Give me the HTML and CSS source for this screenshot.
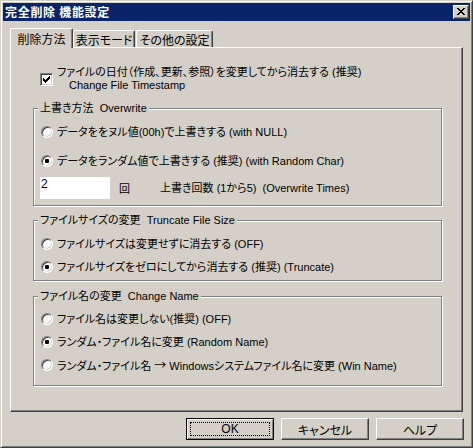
FILE: index.html
```html
<!DOCTYPE html>
<html lang="ja">
<head>
<meta charset="utf-8">
<title>完全削除 機能設定</title>
<link rel="stylesheet" href="styles.css">
</head>
<body>
<div class="window">
  <div class="titlebar">
    <span class="title">完全削除 機能設定</span>
    <span class="close-btn">
      <svg class="close-x" width="8" height="7" viewBox="0 0 8 7" shape-rendering="crispEdges">
        <rect x="0" y="0" width="2" height="1"/><rect x="6" y="0" width="2" height="1"/>
        <rect x="1" y="1" width="2" height="1"/><rect x="5" y="1" width="2" height="1"/>
        <rect x="2" y="2" width="4" height="1"/>
        <rect x="3" y="3" width="2" height="1"/>
        <rect x="2" y="4" width="4" height="1"/>
        <rect x="1" y="5" width="2" height="1"/><rect x="5" y="5" width="2" height="1"/>
        <rect x="0" y="6" width="2" height="1"/><rect x="6" y="6" width="2" height="1"/>
      </svg>
    </span>
  </div>

  <div class="client">
    <div class="tabs">
      <div class="tab active tab-1">削除方法</div>
      <div class="tab tab-2">表示モード</div>
      <div class="tab tab-3">その他の設定</div>
    </div>

    <div class="panel">
      <div class="check-row">
        <span class="checkbox">
          <svg width="7" height="7" viewBox="0 0 7 7" shape-rendering="crispEdges">
            <rect x="0" y="2" width="1" height="3"/>
            <rect x="1" y="3" width="1" height="3"/>
            <rect x="2" y="4" width="1" height="3"/>
            <rect x="3" y="3" width="1" height="3"/>
            <rect x="4" y="2" width="1" height="3"/>
            <rect x="5" y="1" width="1" height="3"/>
            <rect x="6" y="0" width="1" height="3"/>
          </svg>
        </span>
        <div class="check-label">
          <div>ファイルの日付（作成、更新、参照）を変更してから消去する (推奨)</div>
          <div class="sub">Change File Timestamp</div>
        </div>
      </div>

      <fieldset class="group group-overwrite">
        <legend>上書き方法&nbsp; Overwrite</legend>
        <div class="radio-row row-a"><span class="radio"></span><span class="opt">データををヌル値(00h)で上書きする (with NULL)</span></div>
        <div class="radio-row row-b"><span class="radio checked"></span><span class="opt">データをランダム値で上書きする (推奨) (with Random Char)</span></div>
        <div class="count-row">
          <span class="edit">2</span>
          <span class="unit">回</span>
          <span class="count-label">上書き回数 (1から5)&nbsp; (Overwrite Times)</span>
        </div>
      </fieldset>

      <fieldset class="group group-size">
        <legend>ファイルサイズの変更&nbsp; Truncate File Size</legend>
        <div class="radio-row row-c"><span class="radio"></span><span class="opt">ファイルサイズは変更せずに消去する (OFF)</span></div>
        <div class="radio-row row-d"><span class="radio checked"></span><span class="opt">ファイルサイズをゼロにしてから消去する (推奨) (Truncate)</span></div>
      </fieldset>

      <fieldset class="group group-name">
        <legend>ファイル名の変更&nbsp; Change Name</legend>
        <div class="radio-row row-e"><span class="radio"></span><span class="opt">ファイル名は変更しない(推奨) (OFF)</span></div>
        <div class="radio-row row-f"><span class="radio checked"></span><span class="opt">ランダム・ファイル名に変更 (Random Name)</span></div>
        <div class="radio-row row-f"><span class="radio"></span><span class="opt">ランダム・ファイル名 <span class="arrow">→</span> Windowsシステムファイル名に変更 (Win Name)</span></div>
      </fieldset>
    </div>

    <div class="buttons">
      <span class="btn default"><span class="focus">OK</span></span>
      <span class="btn">キャンセル</span>
      <span class="btn">ヘルプ</span>
    </div>
  </div>
</div>
</body>
</html>
```

FILE: styles.css
```css
* { box-sizing: border-box; }

html, body {
  margin: 0;
  padding: 0;
}

body {
  width: 473px;
  height: 448px;
  overflow: hidden;
  background: #d4d0c8;
  color: #000;
  font-family: "Liberation Sans", "Noto Sans CJK JP", sans-serif;
  font-size: 11px;
  line-height: 13px;
  font-feature-settings: "palt";
}

.window {
  width: 473px;
  height: 448px;
  border: 1px solid;
  border-color: #d4d0c8 #404040 #404040 #d4d0c8;
  box-shadow: inset 1px 1px #fff, inset -1px -1px #808080;
  padding: 2px;
  display: flex;
  flex-direction: column;
}

/* title bar */
.titlebar {
  height: 18px;
  background: #0a246a;
  display: flex;
  align-items: center;
  justify-content: space-between;
  padding: 0 1px 0 2px;
}

.title {
  color: #fff;
  font-family: "Noto Sans CJK JP", sans-serif;
  font-weight: bold;
  font-size: 12px;
  letter-spacing: 0.7px;
  line-height: 18px;
}

.close-btn {
  width: 16px;
  height: 14px;
  background: #d4d0c8;
  border: 1px solid;
  border-color: #fff #404040 #404040 #fff;
  box-shadow: inset -1px -1px #808080;
  padding: 2px 0 0 3px;
  display: block;
}

.close-x { display: block; fill: #000; }

/* client area */
.client {
  flex: 1;
  display: flex;
  flex-direction: column;
  padding: 7px 7px 0 7px;
}

.tabs {
  display: flex;
  align-items: flex-end;
  height: 19px;
}

.tab {
  height: 17px;
  border-top: 1px solid #fff;
  border-left: 1px solid #fff;
  border-right: 1px solid #404040;
  border-radius: 2px 2px 0 0;
  box-shadow: inset -1px 0 #808080;
  background: #d4d0c8;
  display: flex;
  align-items: center;
  justify-content: center;
  font-family: "Noto Sans CJK JP", sans-serif;
  font-size: 12px;
  white-space: nowrap;
}

.tab.active {
  position: relative;
  z-index: 1;
  height: 20px;
  margin-bottom: -1px;
  padding-bottom: 1px;
}

.tab-1 { width: 63px; }
.tab-2 { width: 62px; }
.tab-3 { width: 77px; margin-left: 1px; }

.panel {
  width: 453px;
  height: 365px;
  border: 1px solid;
  border-color: #fff #404040 #404040 #fff;
  box-shadow: inset -1px -1px #808080;
  padding: 18px 20px 0 22px;
}

/* checkbox row */
.check-row {
  display: flex;
  align-items: flex-start;
  margin-left: 7px;
}

.checkbox {
  width: 13px;
  height: 13px;
  margin-top: 7px;
  background: #fff;
  border: 1px solid;
  border-color: #808080 #fff #fff #808080;
  box-shadow: inset 1px 1px #404040, inset -1px -1px #d4d0c8;
  padding: 2px 0 0 2px;
  flex: none;
}

.checkbox svg { display: block; fill: #000; }

.check-label {
  margin-left: 4px;
  line-height: 13px;
  white-space: nowrap;
}

.check-label .sub { padding-left: 12px; }

/* group boxes */
.group {
  margin: 0;
  min-width: 0;
  border: 1px solid #808080;
  box-shadow: inset 1px 1px #fff, 1px 1px #fff;
  padding: 0 0 6px 7px;
}

.group legend {
  display: block;
  height: 13px;
  line-height: 13px;
  padding: 0 2px;
  margin-left: -3px;
  background: #d4d0c8;
  white-space: nowrap;
}

.group-overwrite { margin-top: 10px; }
.group-size { margin-top: 8px; }
.group-name { margin-top: 9px; padding-bottom: 13px; }

.radio-row {
  display: flex;
  align-items: center;
  height: 14px;
  white-space: nowrap;
}

.row-a { margin-top: 10px; }
.row-b { margin-top: 15px; }
.row-c { margin-top: 10px; }
.row-d { margin-top: 9px; }
.row-e { margin-top: 9px; }
.row-f { margin-top: 9px; }

.radio {
  width: 12px;
  height: 12px;
  flex: none;
  border-radius: 50%;
  background: #fff;
  border: 1px solid;
  border-color: #808080 #fff #fff #808080;
  box-shadow: inset 1px 1px #404040, inset -1px -1px #d4d0c8;
  display: flex;
  align-items: center;
  justify-content: center;
}

.radio.checked::after {
  content: "";
  width: 4px;
  height: 4px;
  border-radius: 1px;
  background: #000;
}

.opt { margin-left: 4px; line-height: 14px; }

.arrow {
  font-family: "Noto Sans CJK JP", sans-serif;
  font-feature-settings: normal;
  font-size: 12px;
}

.count-row {
  display: flex;
  align-items: center;
  height: 22px;
  margin-top: 9px;
  margin-left: -1px;
  white-space: nowrap;
}

.edit {
  width: 70px;
  height: 22px;
  background: #fff;
  padding: 1px 1px;
  line-height: 12px;
  font-size: 12px;
  flex: none;
}

.unit {
  width: 12px;
  margin-left: 9px;
  font-family: "Noto Sans CJK JP", sans-serif;
}

.count-label { margin-left: 29px; }

/* buttons */
.buttons {
  display: flex;
  justify-content: flex-end;
  gap: 7px;
  margin-top: 6px;
  margin-right: -1px;
}

.btn {
  width: 88px;
  height: 22px;
  border: 1px solid;
  border-color: #fff #404040 #404040 #fff;
  box-shadow: inset -1px -1px #808080;
  display: flex;
  align-items: center;
  justify-content: center;
  font-family: "Noto Sans CJK JP", sans-serif;
  font-size: 12px;
  line-height: 13px;
}

.btn.default {
  border-color: #000;
  box-shadow: inset 1px 1px #fff, inset -1px -1px #808080;
  padding: 3px;
  align-items: stretch;
}

.btn.default .focus {
  flex: 1;
  border: 1px dotted #000;
  display: flex;
  align-items: center;
  justify-content: center;
  font-family: "Liberation Sans", sans-serif;
}
```
